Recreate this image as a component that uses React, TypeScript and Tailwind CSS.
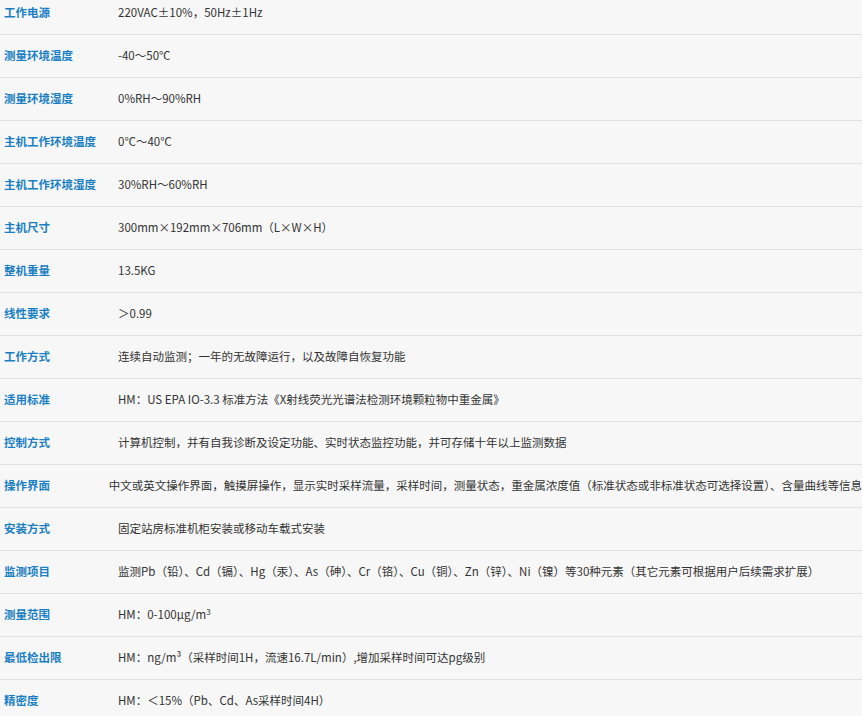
const rows: [string, React.ReactNode][] = [
  ["工作电源", "220VAC±10%，50Hz±1Hz"],
  ["测量环境温度", "-40～50℃"],
  ["测量环境湿度", "0%RH～90%RH"],
  ["主机工作环境温度", "0℃～40℃"],
  ["主机工作环境湿度", "30%RH～60%RH"],
  ["主机尺寸", "300mm×192mm×706mm（L×W×H）"],
  ["整机重量", "13.5KG"],
  ["线性要求", "＞0.99"],
  ["工作方式", "连续自动监测；一年的无故障运行，以及故障自恢复功能"],
  ["适用标准", "HM：US EPA IO-3.3 标准方法《X射线荧光光谱法检测环境颗粒物中重金属》"],
  ["控制方式", "计算机控制，并有自我诊断及设定功能、实时状态监控功能，并可存储十年以上监测数据"],
  ["操作界面", "中文或英文操作界面，触摸屏操作，显示实时采样流量，采样时间，测量状态，重金属浓度值（标准状态或非标准状态可选择设置）、含量曲线等信息"],
  ["安装方式", "固定站房标准机柜安装或移动车载式安装"],
  ["监测项目", "监测Pb（铅）、Cd（镉）、Hg（汞）、As（砷）、Cr（铬）、Cu（铜）、Zn（锌）、Ni（镍）等30种元素（其它元素可根据用户后续需求扩展）"],
  ["测量范围", <>HM：0-100μg/m<sup className="text-[8px]">3</sup></>],
  ["最低检出限", "HM：ng/m³（采样时间1H，流速16.7L/min）,增加采样时间可达pg级别"],
  ["精密度", "HM：＜15%（Pb、Cd、As采样时间4H）"],
];

export default function App() {
  return (
    <div className="w-[862px] h-[716px] overflow-hidden bg-[#f7f7f7] text-[11.5px]" style={{ fontFamily: '"Microsoft YaHei","Noto Sans CJK SC",sans-serif' }}>
      <div className="-mt-[8px]">
        {rows.map(([k, v], i) => (
          <div key={i} className="h-[43px] flex items-center border-b border-[#e2e2e2]">
            <div className="w-[118px] pl-[4px] font-bold text-[#1a7fc4] whitespace-nowrap">{k}</div>
            <div className="text-[#333] whitespace-nowrap">{v}</div>
          </div>
        ))}
      </div>
    </div>
  );
}
